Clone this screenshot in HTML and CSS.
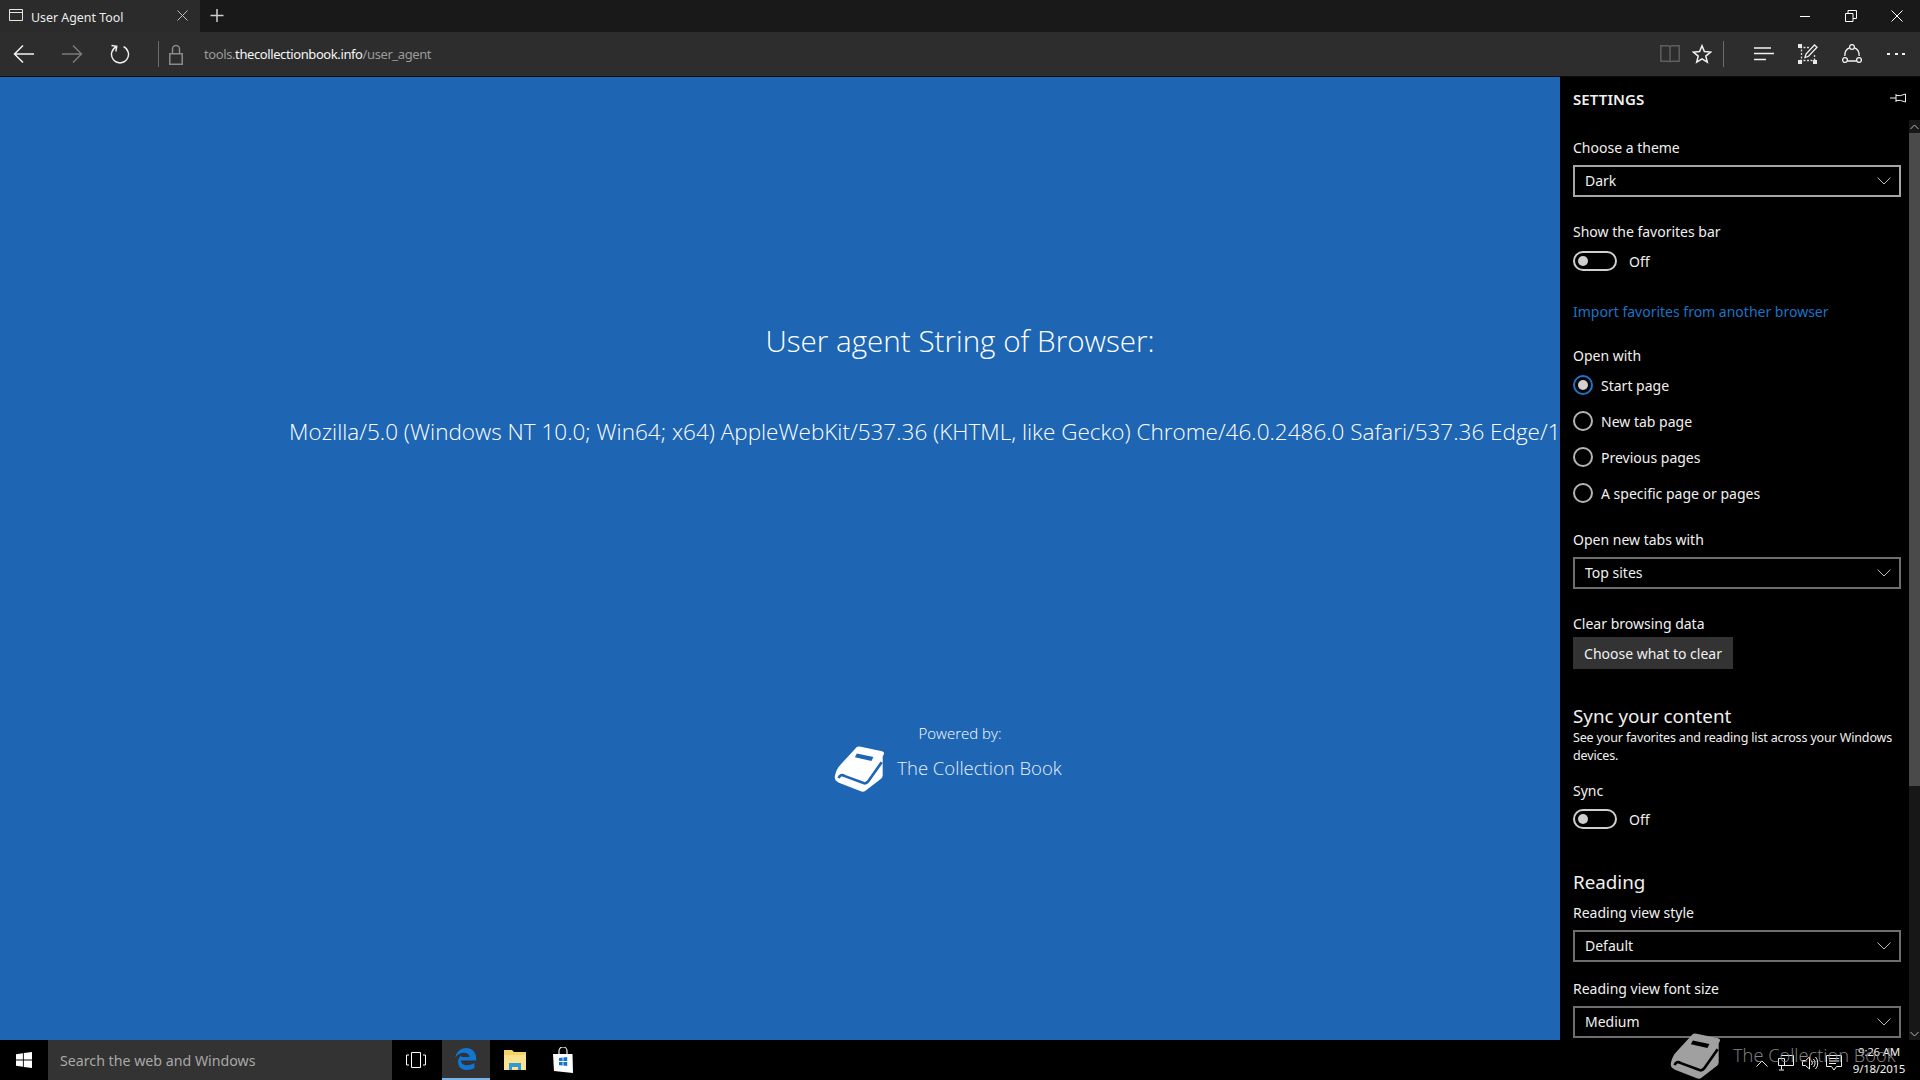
FILE: index.html
```html
<!DOCTYPE html>
<html lang="en">
<head>
<meta charset="utf-8">
<title>User Agent Tool</title>
<link rel="stylesheet" href="styles.css">
</head>
<body>
<svg class="defs" width="0" height="0" aria-hidden="true">
  <symbol id="book" viewBox="3 2 154 141">
    <path fill="currentColor" d="M72 6 Q76 3 84 5 L148 19 Q157 22 153 29 L150 35 L150 92 Q150 98 145 102 L98 138 Q92 143 84 140 L18 114 Q2 107 6 92 Q10 72 24 58 Z"/>
    <path fill="none" stroke="var(--cut)" stroke-width="8" d="M17 100 Q22 86 36 94 L92 115 Q100 118 106 110 L147 52"/>
    <path fill="var(--cut)" d="M72 26 L122 36 L116 48 L66 37 Z"/>
  </symbol>
</svg>
<div class="app">
  <header class="titlebar">
    <div class="tab">
      <svg class="tab-icon" width="14" height="12" viewBox="0 0 14 12"><path d="M.5.5h13v11H.5zM.5 3.500h13" fill="none" stroke="#e6e6e6"/></svg>
      <span class="tab-title">User Agent Tool</span>
      <svg class="tab-close" width="11" height="11" viewBox="0 0 11 11"><path d="M.5.5l10 10M10.500.5l-10 10" stroke="#bdbdbd" fill="none"/></svg>
    </div>
    <svg class="new-tab" width="34" height="13" viewBox="0 0 34 13"><path d="M17 0v13M10.500 6.500h13" stroke="#cfcfcf" stroke-width="1.500" fill="none"/></svg>
    <div class="win-controls">
      <span class="win-btn"><svg width="12" height="12" viewBox="0 0 12 12"><path d="M1 6.500h10" stroke="#fff" fill="none"/></svg></span>
      <span class="win-btn"><svg width="12" height="12" viewBox="0 0 12 12"><path d="M.5 3.500h7.500v8H.5zM3 3.500V.5h8.500v8H8" stroke="#fff" fill="none"/></svg></span>
      <span class="win-btn"><svg width="12" height="12" viewBox="0 0 12 12"><path d="M.5.5l11 11M11.500.5l-11 11" stroke="#fff" fill="none"/></svg></span>
    </div>
  </header>

  <nav class="toolbar">
    <span class="tool"><svg width="22" height="20" viewBox="0 0 22 20"><path d="M21 10H2M10 1.500L1.500 10l8.500 8.500" stroke="#f2f2f2" stroke-width="1.500" fill="none"/></svg></span>
    <span class="tool"><svg width="22" height="20" viewBox="0 0 22 20"><path d="M1 10h19M12 1.500l8.500 8.500-8.500 8.500" stroke="#7a7a7a" stroke-width="1.500" fill="none"/></svg></span>
    <span class="tool"><svg width="20" height="20" viewBox="0 0 20 20"><path d="M6.500 2.200A8.500 8.500 0 1 0 13.500 2.200M1.500 1L6.800 1.800 5.800 7" transform="translate(0 .5)" stroke="#f2f2f2" stroke-width="1.400" fill="none"/></svg></span>
    <span class="divider"></span>
    <span class="lock"><svg width="14" height="21" viewBox="0 0 14 21"><path d="M.8 9.800h12.400v10.400H.8zM3.500 9.500V5a3.500 3.500 0 0 1 7 0v4.500" stroke="#8a8a8a" stroke-width="1.500" fill="none"/></svg></span>
    <span class="url">tools.<b>thecollectionbook.info</b>/user_agent</span>
    <div class="tools-right">
      <span class="tool-sm"><svg width="20" height="18" viewBox="0 0 20 18"><path d="M.8.800h7c1.300 0 2.200.6 2.200 2 0-1.400.9-2 2.200-2h7v15.500h-7c-1.300 0-2.200.4-2.200 1 0-.6-.9-1-2.200-1h-7zM10 2.800V17" stroke="#5e5e5e" stroke-width="1.500" fill="none"/></svg></span>
      <span class="tool-sm"><svg width="20" height="20" viewBox="0 0 20 20"><path d="M10 1.800l2.400 5.800 6.200.5-4.800 4 1.500 6.100L10 14.900l-5.300 3.300 1.500-6.100-4.800-4 6.200-.5z" stroke="#f2f2f2" stroke-width="1.500" fill="none"/></svg></span>
      <span class="divider divider-right"></span>
      <span class="tool-md"><svg width="20" height="15" viewBox="0 0 20 15"><path d="M0 1h17M0 6.500h20M0 12.500h12" stroke="#f2f2f2" stroke-width="1.300" fill="none"/></svg></span>
      <span class="tool-md"><svg width="20" height="20" viewBox="0 0 20 20"><path d="M3.500 2v16M16.500 11v7M2 16.500h16M2 3.500h9" stroke="#d8d8d8" stroke-width="1.300" stroke-dasharray="2 1.500" fill="none"/><path d="M0 0h4v4H0zM0 16h4v4H0zM15 16h4v4h-4z" fill="#e8e8e8"/><path d="M7 13.500L8 10 16.500 1l2.500 2.300-8.500 9z" stroke="#f2f2f2" stroke-width="1.300" fill="#2d2d2d"/></svg></span>
      <span class="tool-md"><svg width="20" height="20" viewBox="0 0 20 20"><path d="M7.500 3.800C4.500 5 2.600 8 2.800 12M12.500 3.800c3 1.200 4.900 4.200 4.700 8.200M5.500 17h9" stroke="#f2f2f2" stroke-width="1.300" fill="none"/><circle cx="10" cy="3" r="2.400" stroke="#f2f2f2" stroke-width="1.300" fill="none"/><circle cx="3" cy="16" r="2.400" stroke="#f2f2f2" stroke-width="1.300" fill="none"/><circle cx="17" cy="16" r="2.400" stroke="#f2f2f2" stroke-width="1.300" fill="none"/></svg></span>
      <span class="tool-md"><svg width="18" height="4" viewBox="0 0 18 4"><path d="M0 1h3v2H0zM8 1h3v2H8zM15 1h3v2h-3z" fill="#f2f2f2"/></svg></span>
    </div>
  </nav>

  <div class="stage">
    <main class="page">
      <div class="page-inner">
        <h1 class="page-title">User agent String of Browser:</h1>
        <p class="ua">Mozilla/5.0 (Windows NT 10.0; Win64; x64) AppleWebKit/537.36 (KHTML, like Gecko) Chrome/46.0.2486.0 Safari/537.36 Edge/13.10547</p>
        <p class="powered">Powered by:</p>
        <div class="brand">
          <svg class="brand-book" width="51" height="48"><use href="#book"/></svg>
          <span class="brand-name">The Collection Book</span>
        </div>
      </div>
    </main>

    <aside class="panel">
      <div class="panel-head">
        <h2 class="panel-title">SETTINGS</h2>
        <svg class="pin" width="16" height="10" viewBox="0 0 16 10"><path d="M0 5h6M6 1v8M6 2.500q4 1 9.500-1.500v8q-5.500-2.500-9.500-1.500" stroke="#f0f0f0" fill="none"/></svg>
      </div>

      <div class="label m28">Choose a theme</div>
      <div class="select select-hover"><span>Dark</span><svg width="14" height="8" viewBox="0 0 14 8"><path d="M.5.500L7 7l6.500-6.500" stroke="#bdbdbd" fill="none"/></svg></div>

      <div class="label m24">Show the favorites bar</div>
      <div class="toggle-row t10"><span class="toggle"><i></i></span><span>Off</span></div>

      <a class="link">Import favorites from another browser</a>

      <div class="label m23">Open with</div>
      <div class="radios">
        <div class="radio-row"><span class="radio on"></span>Start page</div>
        <div class="radio-row"><span class="radio"></span>New tab page</div>
        <div class="radio-row"><span class="radio"></span>Previous pages</div>
        <div class="radio-row"><span class="radio"></span>A specific page or pages</div>
      </div>

      <div class="label m18">Open new tabs with</div>
      <div class="select"><span>Top sites</span><svg width="14" height="8" viewBox="0 0 14 8"><path d="M.5.500L7 7l6.500-6.500" stroke="#bdbdbd" fill="none"/></svg></div>

      <div class="label m24 flush">Clear browsing data</div>
      <button class="btn">Choose what to clear</button>

      <h3 class="section s33">Sync your content</h3>
      <p class="desc">See your favorites and reading list across your Windows devices.</p>
      <div class="label m15 near">Sync</div>
      <div class="toggle-row"><span class="toggle"><i></i></span><span>Off</span></div>

      <h3 class="section s39">Reading</h3>
      <div class="label m6">Reading view style</div>
      <div class="select"><span>Default</span><svg width="14" height="8" viewBox="0 0 14 8"><path d="M.5.500L7 7l6.500-6.500" stroke="#bdbdbd" fill="none"/></svg></div>
      <div class="label m16">Reading view font size</div>
      <div class="select"><span>Medium</span><svg width="14" height="8" viewBox="0 0 14 8"><path d="M.5.500L7 7l6.500-6.500" stroke="#bdbdbd" fill="none"/></svg></div>

      <div class="scrollbar">
        <span class="sb-arrow"><svg width="9" height="6" viewBox="0 0 9 6"><path d="M.5 5l4-4 4 4" stroke="#b5b5b5" fill="none"/></svg></span>
        <span class="sb-thumb"></span>
        <span class="sb-arrow sb-down"><svg width="9" height="6" viewBox="0 0 9 6"><path d="M.5 1l4 4 4-4" stroke="#b5b5b5" fill="none"/></svg></span>
      </div>
    </aside>
  </div>

  <footer class="taskbar">
    <span class="start"><svg width="16" height="16" viewBox="0 0 16 16"><path d="M0 2.200L6.900 1.200V7.500H0zM7.800 1.100L16 0V7.500H7.800zM0 8.400H6.900V14.800L0 13.800zM7.800 8.400H16V16L7.800 14.900z" fill="#fff"/></svg></span>
    <span class="search">Search the web and Windows</span>
    <span class="task task-view"><svg width="20" height="16" viewBox="0 0 20 16"><path d="M5.500.5h9v15h-9zM3 3H.5v10H3M17 3h2.500v10H17" stroke="#fff" fill="none"/></svg></span>
    <span class="task task-edge"><svg width="22" height="24" viewBox="0 0 22 24"><path d="M5.800 13.400h15.400c.7-7-3.300-12.400-10-12.400C5.500 1 .9 5.400.3 10.800 2.400 7.600 5.500 5.800 9 5.800c3.300 0 5.300 1.800 5.500 4.100H6.300C7.100 7.800 5.400 8.800 4.200 10.800 1.600 15.500 3.400 22.800 10.800 23c3.500.1 6.600-.8 8.600-2v-5c-2 1.300-4.500 2.200-7.200 2.200-3.700 0-6.200-1.800-6.400-4.800z" fill="#1176d2"/></svg></span>
    <span class="task task-wide"><svg width="22" height="20" viewBox="0 0 22 20"><path d="M0 0h8l2 2h12v18H0z" fill="#f6d365"/><path d="M0 5h22v15H0z" fill="#fbe28e"/><path d="M5 20v-7h12v7h-3v-3H8v3z" fill="#2d9bd8"/></svg></span>
    <span class="task"><svg width="20" height="26" viewBox="0 0 20 26"><path d="M6 7V4a4 4 0 0 1 8 0v3" stroke="#e8e8e8" stroke-width="1.200" fill="none"/><path d="M0 7h19.500L20 26 1 24z" fill="#fff"/><path d="M6 11l3.600-.4v3.500H6zM10.400 10.500l3.800-.5v4.100h-3.800zM6 15h3.600v3.600L6 18.200zM10.400 15h3.800v4.100l-3.800-.5z" fill="#1176d2"/></svg></span>
    <div class="tray">
      <span class="tray-item"><svg width="12" height="7" viewBox="0 0 12 7"><path d="M.5 6.500L6 1l5.500 5.500" stroke="#e8e8e8" fill="none"/></svg></span>
      <span class="tray-item"><svg width="16" height="16" viewBox="0 0 16 16"><path d="M3 .5h12.500v10H3M.5 3.500h6v7h-6zM3.500 10.500v4M1 15h5" stroke="#f0f0f0" fill="none"/></svg></span>
      <span class="tray-item"><svg width="17" height="14" viewBox="0 0 17 14"><path d="M.5 4.500h3l4-3.500v12l-4-3.500h-3zM9.500 5a3 3 0 0 1 0 4M11.500 3a6 6 0 0 1 0 8M13.500 1a9 9 0 0 1 0 12" stroke="#f0f0f0" fill="none"/></svg></span>
      <span class="tray-item"><svg width="16" height="16" viewBox="0 0 16 16"><path d="M.5.500h15v11h-5l-2.500 3.500-2.500-3.500h-5zM3 3.500h10M3 6h10M3 8.500h7" stroke="#f0f0f0" fill="none"/></svg></span>
      <span class="clock"><span>9:26 AM</span><span>9/18/2015</span></span>
    </div>
  </footer>

  <div class="watermark">
    <svg class="wm-book" width="51" height="48"><use href="#book"/></svg>
    <span class="wm-name">The Collection Book</span>
  </div>
</div>
</body>
</html>
```
FILE: styles.css
```css
* { box-sizing: border-box; }
html, body { margin: 0; height: 100%; overflow: hidden; background: #000; }
body { font-family: "Noto Sans", "Open Sans", sans-serif; color: #fff; }
.defs { position: absolute; }
.app { position: relative; width: 1920px; height: 1080px; display: grid; grid-template-rows: 32px 45px 963px 40px; overflow: hidden; }

/* title bar */
.titlebar { display: flex; align-items: center; background: #191919; }
.tab { width: 200px; height: 32px; background: #2b2b2b; display: flex; align-items: center; padding-left: 9px; }
.tab-icon { margin-top: -3px; }
.tab-title { font-size: 12.4px; margin-left: 8px; width: 146px; color: #ececec; padding-top: 2px; }
.tab-close { margin-top: -2px; }
.new-tab { margin-top: -1px; }
.win-controls { margin-left: auto; display: flex; }
.win-btn { width: 46px; height: 32px; display: flex; align-items: center; justify-content: center; }
.win-btn svg { margin-top: -1px; }

/* toolbar */
.toolbar { display: flex; align-items: center; background: #2d2d2d; border-bottom: 1px solid #0c0c0c; }
.tool { width: 48px; height: 44px; display: flex; align-items: center; justify-content: center; }
.divider { width: 1px; height: 26px; background: #6b6b6b; margin-left: 14px; }
.lock { width: 14px; margin-left: 10px; display: flex; }
.url { font-size: 13px; margin-left: 21px; color: #9a9a9a; letter-spacing: -0.4px; }
.url b { font-weight: 400; color: #f5f5f5; }
.tools-right { margin-left: auto; display: flex; align-items: center; padding-right: 2px; }
.tool-sm { width: 32px; height: 44px; display: flex; align-items: center; justify-content: center; }
.divider-right { margin: 0 18px 0 5px; }
.tool-md { width: 44px; height: 44px; display: flex; align-items: center; justify-content: center; }

/* page */
.stage { display: flex; background: #1e66b4; overflow: hidden; }
.page { width: 1560px; flex: none; overflow: hidden; --cut: #1e66b4; }
.page-inner { width: 1920px; padding-top: 244px; display: flex; flex-direction: column; align-items: center; }
.page-title { margin: 0; font-size: 29.6px; line-height: 40px; font-weight: 300; font-family: "Open Sans", sans-serif; white-space: nowrap; }
.ua { margin: 56px 0 0; padding-left: 12px; font-size: 22.5px; line-height: 30px; font-weight: 300; font-family: "Open Sans", sans-serif; white-space: nowrap; }
.powered { margin: 276px 0 0; font-size: 15px; line-height: 20px; font-weight: 300; font-family: "Open Sans", sans-serif; }
.brand { display: flex; align-items: center; gap: 12px; padding-right: 24px; margin-top: 2px; }
.brand-book { color: #fff; flex: none; }
.brand-name { font-size: 18.5px; font-weight: 300; font-family: "Open Sans", sans-serif; color: #e8f0fa; margin-top: -4px; }

/* settings panel */
.panel { position: relative; width: 360px; flex: none; background: #000; padding: 12px 19px 0 13px; font-size: 14px; color: #f0f0f0; display: flex; flex-direction: column; align-items: stretch; }
.panel-head { display: flex; align-items: center; justify-content: space-between; height: 20px; }
.panel-title { margin: 0; font-size: 15px; font-weight: 600; line-height: 20px; letter-spacing: 0.1px; }
.pin { margin-right: -5px; margin-top: -2px; }
.label { line-height: 22px; height: 20px; margin-bottom: 8px; white-space: nowrap; }
.label.flush { margin-bottom: 4px; }
.label.near { margin-bottom: 9px; }
.m28 { margin-top: 28px; } .m24 { margin-top: 24px; } .m23 { margin-top: 23px; } .m18 { margin-top: 18px; } .m16 { margin-top: 16px; } .m15 { margin-top: 15px; } .m6 { margin-top: 6px; }
.select { height: 32px; border: 2px solid #6e6e6e; padding: 0 8px 2px 10px; display: flex; align-items: center; justify-content: space-between; flex: none; }
.select svg { margin-top: 2px; }
.select-hover { border-color: #a6a6a6; }
.toggle-row { display: flex; align-items: center; gap: 12px; height: 20px; flex: none; }
.t10 { margin-top: 2px; }
.toggle { width: 44px; height: 20px; border: 2px solid #cfcfcf; border-radius: 10px; flex: none; display: flex; align-items: center; padding-left: 3px; }
.toggle i { width: 10px; height: 10px; border-radius: 50%; background: #cfcfcf; }
.link { margin-top: 31px; line-height: 20px; color: #1b74c8; white-space: nowrap; }
.radios { margin-top: -6px; }
.radio-row { height: 36px; display: flex; align-items: center; gap: 8px; }
.radio { width: 20px; height: 20px; border: 2px solid #b5b5b5; border-radius: 50%; flex: none; display: flex; align-items: center; justify-content: center; }
.radio.on { border-color: #1976c8; }
.radio.on::after { content: ""; width: 10px; height: 10px; border-radius: 50%; background: #d0d0d0; }
.btn { width: 160px; height: 32px; flex: none; border: 0; background: #333; color: #f0f0f0; font: inherit; padding: 0; }
.section { margin: 0; font-size: 18.8px; font-weight: 400; line-height: 28px; white-space: nowrap; }
.s33 { margin-top: 33px; } .s39 { margin-top: 39px; }
.desc { margin: -1px -8px 0 0; font-size: 12.5px; line-height: 18px; letter-spacing: -0.15px; }

.scrollbar { position: absolute; top: 43px; right: 0; bottom: 0; width: 11px; background: #171717; display: flex; flex-direction: column; }
.sb-arrow { height: 13px; display: flex; align-items: center; justify-content: center; flex: none; }
.sb-thumb { height: 653px; background: #4a4a4a; flex: none; }
.sb-down { margin-top: auto; }

/* taskbar */
.taskbar { display: flex; align-items: stretch; background: #000; position: relative; z-index: 1; }
.start { width: 48px; display: flex; align-items: center; justify-content: center; }
.search { width: 344px; background: #333; color: #a8a8a8; font-size: 14.2px; display: flex; align-items: center; padding-left: 12px; }
.task { width: 48px; display: flex; align-items: center; justify-content: center; }
.task-view { margin-right: 2px; }
.task-wide { width: 49px; padding-left: 1px; }
.task-edge { background: #333; border-bottom: 2px solid #77b5e8; }
.tray { margin-left: auto; display: flex; align-items: center; padding-right: 9px; position: relative; z-index: 3; padding-top: 6px; }
.tray-item { width: 24px; display: flex; align-items: center; justify-content: center; }
.clock { width: 64px; display: flex; flex-direction: column; align-items: center; font-size: 11.5px; line-height: 17px; letter-spacing: -0.25px; margin-top: -6px; margin-left: 1px; color: #f0f0f0; }

.watermark { position: absolute; left: 1670px; top: 1032px; display: flex; align-items: flex-start; gap: 12px; color: #a0a0a0; --cut: #000; z-index: 2; }
.wm-book { flex: none; }
.wm-name { font-size: 18.3px; font-family: "Open Sans", sans-serif; color: #868686; white-space: nowrap; margin-top: 10px; font-weight: 300; }
```
